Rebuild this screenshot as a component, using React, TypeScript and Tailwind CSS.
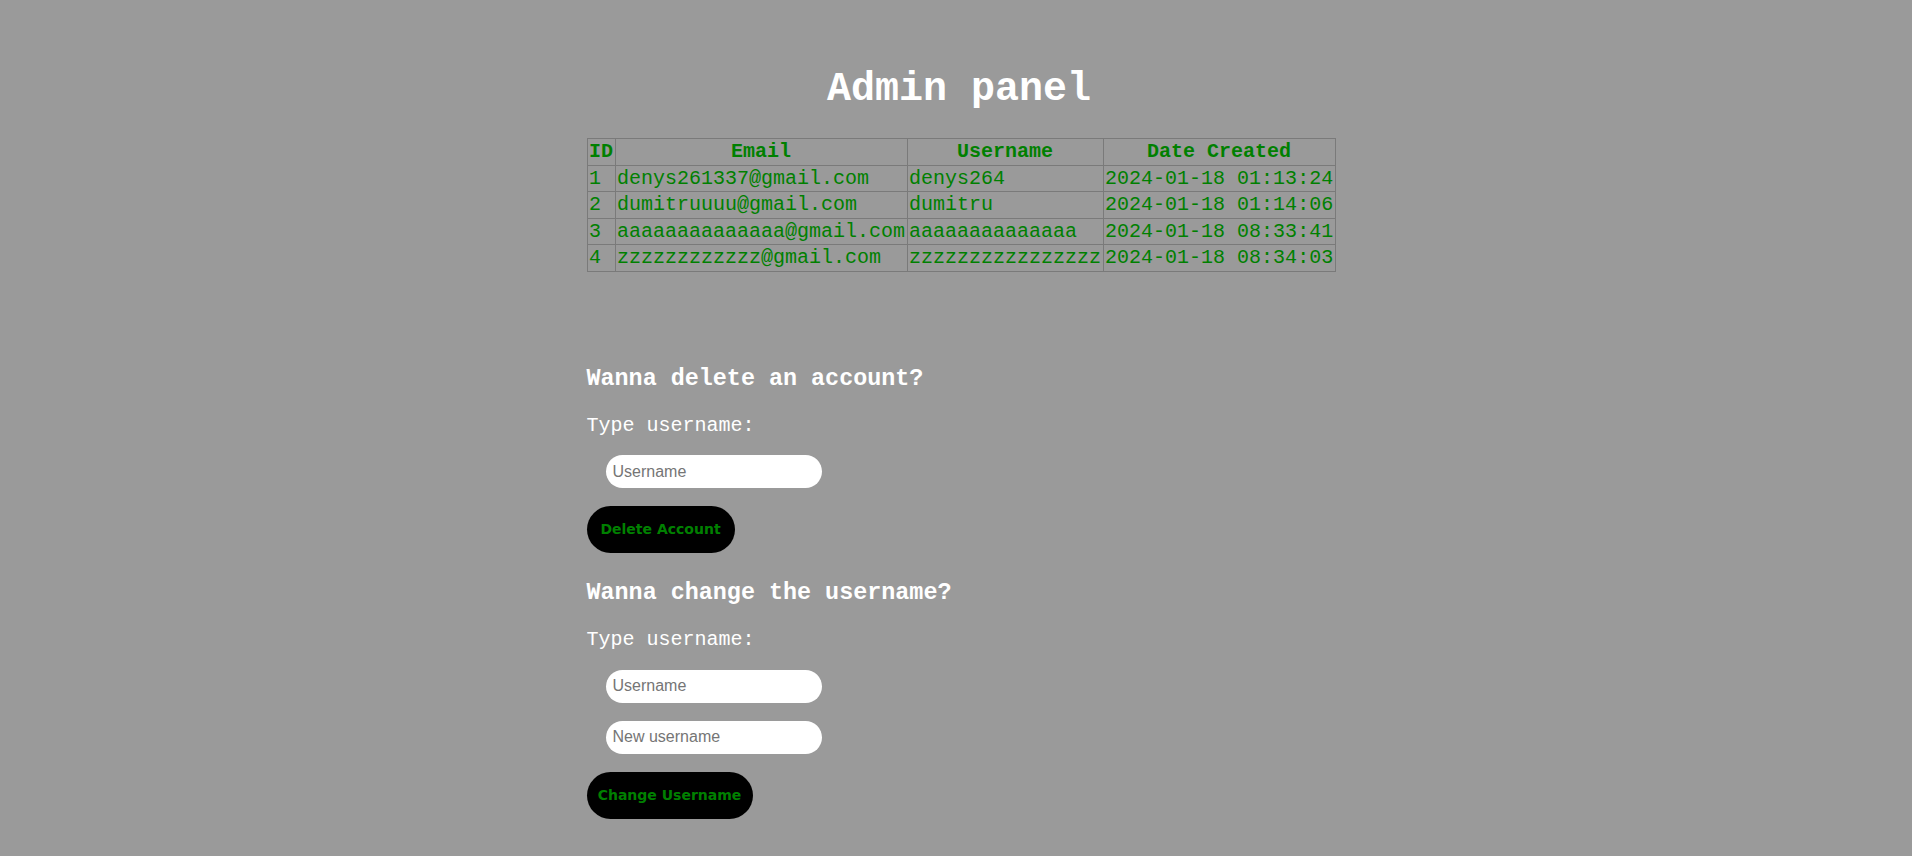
import React from 'react';

const users = [
  { id: 1, email: 'denys261337@gmail.com', username: 'denys264', created: '2024-01-18 01:13:24' },
  { id: 2, email: 'dumitruuuu@gmail.com', username: 'dumitru', created: '2024-01-18 01:14:06' },
  { id: 3, email: 'aaaaaaaaaaaaaa@gmail.com', username: 'aaaaaaaaaaaaaa', created: '2024-01-18 08:33:41' },
  { id: 4, email: 'zzzzzzzzzzzz@gmail.com', username: 'zzzzzzzzzzzzzzzz', created: '2024-01-18 08:34:03' },
];

function TextInput({ placeholder }: { placeholder: string }) {
  return (
    <input
      type="text"
      placeholder={placeholder}
      className="ml-[19px] w-[216px] h-[33px] rounded-full bg-white px-[7px] text-[16px] text-black placeholder:text-[#757575] font-['Liberation_Sans',Arial,sans-serif] outline-none"
    />
  );
}

function PillButton({ children, width }: { children: React.ReactNode; width: string }) {
  return (
    <button
      className={`${width} h-[47px] rounded-full bg-black text-[#008000] text-[14px] font-bold font-['Comic_Sans_MS','DejaVu_Sans',sans-serif] flex items-center justify-center`}
    >
      {children}
    </button>
  );
}

export default function App() {
  return (
    <div className="min-h-[856px] w-full bg-[#9a9a9a] font-['Liberation_Mono','Courier_New',monospace] text-white">
      <div className="flex justify-center pl-[12px]">
        <div className="w-[751px] flex flex-col pb-[38px]">
          <h1 className="mt-[67px] pr-[6px] text-center text-[40px] leading-[45px] font-bold">Admin panel</h1>

          {/* users table */}
          <table className="mt-[26px] border-collapse text-[20px] leading-[23.6px] text-[#008000] self-start">
            <thead>
              <tr>
                <th className="border border-[#7a7a7a] px-[1.5px] py-[1px] font-bold">ID</th>
                <th className="border border-[#7a7a7a] px-[1.5px] py-[1px] font-bold">Email</th>
                <th className="border border-[#7a7a7a] px-[1.5px] py-[1px] font-bold">Username</th>
                <th className="border border-[#7a7a7a] px-[1.5px] py-[1px] font-bold">Date Created</th>
              </tr>
            </thead>
            <tbody>
              {users.map((u) => (
                <tr key={u.id}>
                  <td className="border border-[#7a7a7a] px-[1.5px] py-[1px]">{u.id}</td>
                  <td className="border border-[#7a7a7a] px-[1.5px] py-[1px]">{u.email}</td>
                  <td className="border border-[#7a7a7a] px-[1.5px] py-[1px]">{u.username}</td>
                  <td className="border border-[#7a7a7a] px-[1.5px] py-[1px]">{u.created}</td>
                </tr>
              ))}
            </tbody>
          </table>

          {/* delete */}
          <h3 className="mt-[94px] text-[23.4px] leading-[26.5px] font-bold">Wanna delete an account?</h3>
          <p className="mt-[22px] text-[20px] leading-[23px]">Type username:</p>
          <div className="mt-[18px]">
            <TextInput placeholder="Username" />
          </div>
          <div className="mt-[18px]">
            <PillButton width="w-[148px]">Delete Account</PillButton>
          </div>

          {/* rename */}
          <h3 className="mt-[27px] text-[23.4px] leading-[26.5px] font-bold">Wanna change the username?</h3>
          <p className="mt-[21px] text-[20px] leading-[23px]">Type username:</p>
          <div className="mt-[19px]">
            <TextInput placeholder="Username" />
          </div>
          <div className="mt-[18px]">
            <TextInput placeholder="New username" />
          </div>
          <div className="mt-[18px]">
            <PillButton width="w-[166px]">Change Username</PillButton>
          </div>
        </div>
      </div>
    </div>
  );
}
